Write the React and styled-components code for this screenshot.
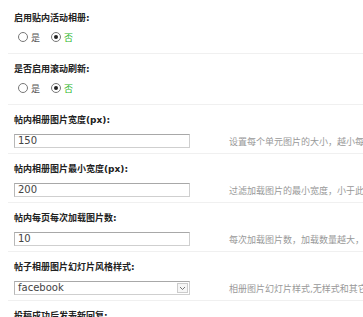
import React from 'react';
import styled, { createGlobalStyle } from 'styled-components';

const GlobalStyle = createGlobalStyle`
  html, body {
    margin: 0;
    padding: 0;
    background: #fff;
  }
  body {
    font-family: "DejaVu Sans", "Noto Sans CJK SC", sans-serif;
    font-size: 9px;
    color: #333;
  }
`;

const Page = styled.div`
  padding: 3px 0 0 8px;
  width: 355px;
  overflow: hidden;
`;

const Section = styled.div`
  border-bottom: 1px solid #f0f0f0;
  padding: 9px 0 ${(p) => p.$bottom || 5}px 6px;
`;

const Label = styled.div`
  font-weight: bold;
  color: #222;
  line-height: 12px;
  height: 12px;
  white-space: nowrap;
`;

const RadioRow = styled.div`
  display: flex;
  align-items: center;
  gap: 11px;
  height: 12px;
  margin-top: 7px;
  padding-left: 4px;
`;

const RadioItem = styled.label`
  display: flex;
  align-items: center;
  gap: 3px;
  color: ${(p) => (p.$checked ? '#1fb51f' : '#555')};
`;

const Circle = styled.span`
  width: 8px;
  height: 8px;
  border: 1px solid #777;
  border-radius: 50%;
  background: #fff;
  display: flex;
  align-items: center;
  justify-content: center;

  &::after {
    content: '';
    width: 4px;
    height: 4px;
    border-radius: 50%;
    background: ${(p) => (p.$checked ? '#222' : 'transparent')};
  }
`;

const ValueRow = styled.div`
  display: flex;
  align-items: center;
  margin-top: 8px;
  height: 14px;
  white-space: nowrap;
`;

const TextBox = styled.div`
  width: 176px;
  height: 14px;
  box-sizing: border-box;
  border: 1px solid #cfcfcf;
  border-top-color: #a8a8a8;
  border-left-color: #b8b8b8;
  padding-left: 3px;
  font-size: 10px;
  line-height: 12px;
  color: #444;
  flex-shrink: 0;
`;

const SelectBox = styled(TextBox)`
  display: flex;
  align-items: center;
  justify-content: space-between;
  padding-right: 1px;
`;

const Arrow = styled.span`
  width: 11px;
  height: 10px;
  box-sizing: border-box;
  border: 1px solid #ccc;
  background: #f6f6f6;
  display: flex;
  align-items: center;
  justify-content: center;
`;

const Help = styled.div`
  margin-left: 39px;
  color: #999;
  font-size: 9px;
`;

const RadioSetting = ({ label, bottom }) => (
  <Section $bottom={bottom}>
    <Label>{label}</Label>
    <RadioRow>
      <RadioItem>
        <Circle />是
      </RadioItem>
      <RadioItem $checked>
        <Circle $checked />否
      </RadioItem>
    </RadioRow>
  </Section>
);

const InputSetting = ({ label, value, help, select }) => (
  <Section>
    <Label>{label}</Label>
    <ValueRow>
      {select ? (
        <SelectBox>
          {value}
          <Arrow>
            <svg width="7" height="5" viewBox="0 0 7 5">
              <path d="M1 1 L3.5 3.5 L6 1" fill="none" stroke="#777" strokeWidth="1" />
            </svg>
          </Arrow>
        </SelectBox>
      ) : (
        <TextBox>{value}</TextBox>
      )}
      <Help>{help}</Help>
    </ValueRow>
  </Section>
);

export default function App() {
  return (
    <>
      <GlobalStyle />
      <Page>
        <RadioSetting label="启用贴内活动相册:" bottom={10} />
        <RadioSetting label="是否启用滚动刷新:" bottom={10} />
        <InputSetting
          label="帖内相册图片宽度(px):"
          value="150"
          help="设置每个单元图片的大小，越小每行显示的图片越多"
        />
        <InputSetting
          label="帖内相册图片最小宽度(px):"
          value="200"
          help="过滤加载图片的最小宽度，小于此宽度的图片不显示"
        />
        <InputSetting
          label="帖内每页每次加载图片数:"
          value="10"
          help="每次加载图片数，加载数量越大，加载越慢"
        />
        <InputSetting
          label="帖子相册图片幻灯片风格样式:"
          value="facebook"
          help="相册图片幻灯片样式,无样式和其它可选"
          select
        />
        <Section>
          <Label>投稿成功后发表新回复:</Label>
        </Section>
      </Page>
    </>
  );
}
